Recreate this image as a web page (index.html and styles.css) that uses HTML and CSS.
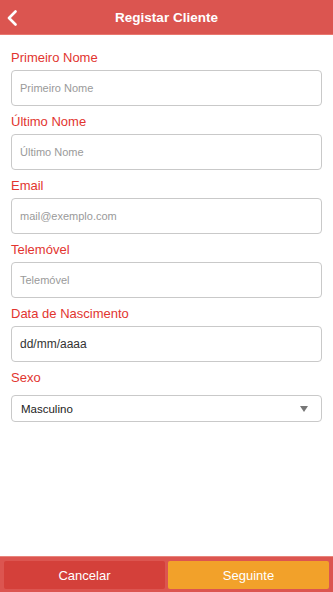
FILE: index.html
```html
<!DOCTYPE html>
<html lang="pt">
<head>
<meta charset="utf-8">
<meta name="viewport" content="width=device-width, initial-scale=1">
<title>Registar Cliente</title>
<link rel="stylesheet" href="styles.css">
</head>
<body>
<div class="app">
  <header class="topbar">
    <button class="back" aria-label="Voltar">
      <svg width="12" height="16" viewBox="0 0 12 16"><path d="M9.5 1.5 L3 8 L9.5 14.5" fill="none" stroke="#fff" stroke-width="2.6" stroke-linecap="round" stroke-linejoin="round"/></svg>
    </button>
    <h1 class="title">Registar Cliente</h1>
  </header>
  <main class="form">
    <div class="field">
      <label class="label">Primeiro Nome</label>
      <div class="input placeholder">Primeiro Nome</div>
    </div>
    <div class="field">
      <label class="label">Último Nome</label>
      <div class="input placeholder">Último Nome</div>
    </div>
    <div class="field">
      <label class="label">Email</label>
      <div class="input placeholder">mail@exemplo.com</div>
    </div>
    <div class="field">
      <label class="label">Telemóvel</label>
      <div class="input placeholder">Telemóvel</div>
    </div>
    <div class="field">
      <label class="label">Data de Nascimento</label>
      <div class="input value">dd/mm/aaaa</div>
    </div>
    <div class="field">
      <label class="label">Sexo</label>
      <div class="select">
        <span>Masculino</span>
        <svg class="caret" width="8" height="6" viewBox="0 0 8 6"><path d="M0 0 H8 L4 6 Z" fill="#777"/></svg>
      </div>
    </div>
  </main>
  <footer class="footer">
    <button class="btn cancel">Cancelar</button>
    <button class="btn next">Seguinte</button>
  </footer>
</div>
</body>
</html>
```
FILE: styles.css
```css
* { box-sizing: border-box; }
html, body { margin: 0; padding: 0; }
body {
  font-family: "Liberation Sans", Arial, sans-serif;
  background: #fff;
}
.app {
  width: 333px;
  height: 592px;
  display: flex;
  flex-direction: column;
}
.topbar {
  height: 35px;
  background: #db5550;
  border-bottom: 1px solid #e9776f;
  display: flex;
  align-items: center;
  justify-content: center;
  position: relative;
  flex-shrink: 0;
}
.back {
  position: absolute;
  left: 5px;
  top: 9px;
  background: none;
  border: 0;
  padding: 0;
  width: 14px;
  height: 18px;
  display: flex;
  align-items: center;
  justify-content: center;
}
.title {
  margin: 0;
  color: #fff;
  font-size: 13.5px;
  font-weight: bold;
  line-height: 16px;
  margin-top: 1px;
}
.form {
  flex: 1;
  padding: 15px 11px 0 11px;
}
.field {
  display: flex;
  flex-direction: column;
  margin-bottom: 8px;
}
.label {
  color: #e2352f;
  font-size: 13px;
  line-height: 16px;
  height: 16px;
  margin-bottom: 4px;
}
.input {
  height: 36px;
  border: 1px solid #c9c9c9;
  border-radius: 4px;
  padding: 0 8px;
  display: flex;
  align-items: center;
  font-size: 11px;
}
.placeholder { color: #9a9a9a; }
.value { color: #333; font-size: 12px; }
.select {
  margin-top: 5px;
  height: 27px;
  border: 1px solid #c9c9c9;
  border-radius: 4px;
  padding: 0 13px 0 9px;
  display: flex;
  align-items: center;
  justify-content: space-between;
  font-size: 11.5px;
  color: #222;
}
.footer {
  height: 36px;
  flex-shrink: 0;
  background: #dc5550;
  border-top: 1px solid #e8847c;
  display: flex;
  gap: 3px;
  padding: 4px 4px 3px 4px;
}
.btn {
  flex: 1;
  border: 0;
  border-radius: 2px;
  color: #fff;
  font-family: "Liberation Sans", Arial, sans-serif;
  font-size: 13px;
  padding: 0;
}
.cancel { background: #d4403a; }
.next { background: #f2a12a; }
```
